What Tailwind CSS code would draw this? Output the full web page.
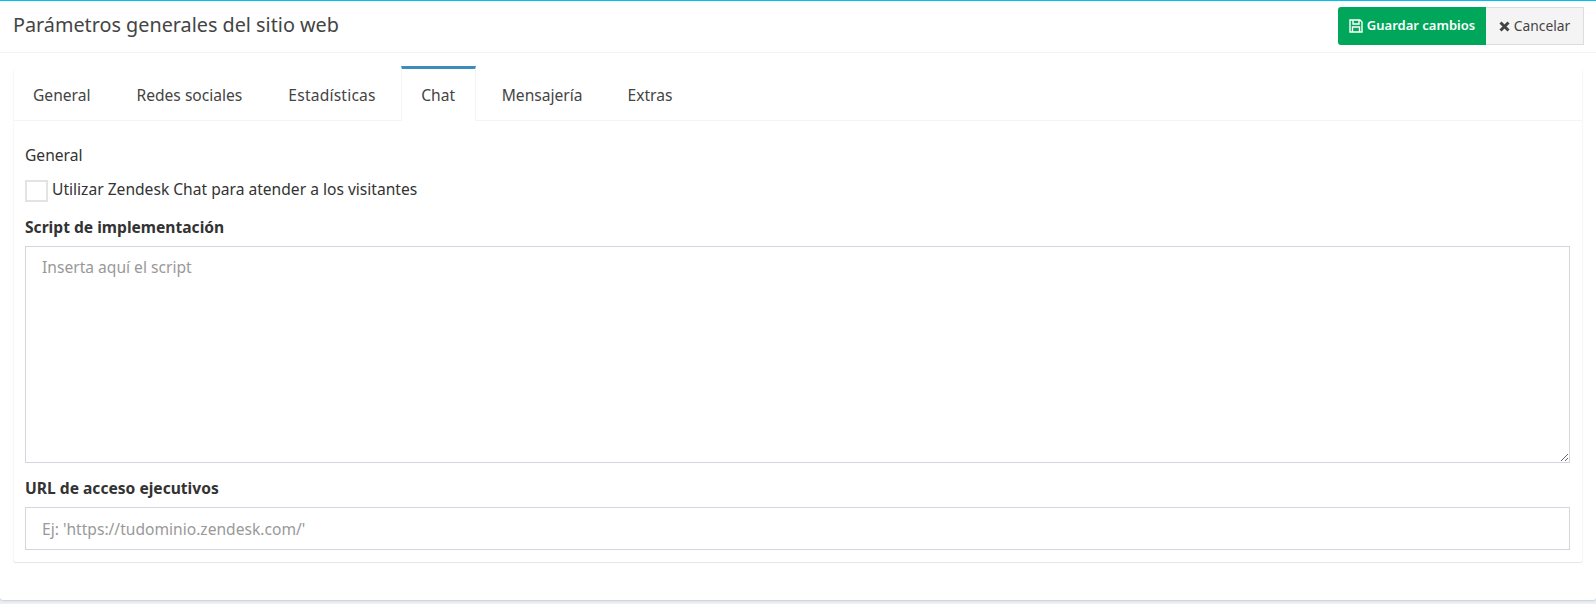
<!DOCTYPE html>
<html lang="es">

<head>
  <meta charset="UTF-8">
  <meta name="viewport" content="width=device-width, initial-scale=1.0">
  <title>Parámetros generales del sitio web</title>
  <script src="https://cdn.jsdelivr.net/npm/@tailwindcss/browser@4"></script>
</head>

<body class="bg-[#ecf0f5] font-['Noto_Sans','Lato',sans-serif] text-[#333] h-[604px] overflow-hidden">

  <div class="h-[600px] bg-white border-t border-[#00c0ef] rounded-b-[3px] shadow-[0_1px_2px_rgba(0,0,0,0.15)]">

    <!-- Cabecera -->
    <header class="h-[52px] flex items-center justify-between pl-[13px] pr-[12px] border-b border-[#f4f4f4]">
      <h1 class="text-[19.800px] text-[#444] pb-[4px]">Parámetros generales del sitio web</h1>
      <div class="flex h-[38px] mb-[1px]">
        <button class="w-[148px] bg-[#00a65a] text-white text-[13px] font-semibold rounded-l-[3px] flex items-center justify-center gap-[4px]">
          <svg class="w-[14px] h-[14px]" viewBox="0 0 14 14" fill="none" stroke="currentColor" stroke-width="1.4"><path d="M1 1h10l2 2v10H1z"/><path d="M4 1v4h6V1M3.500 13V8h7v5"/></svg>
          Guardar cambios
        </button>
        <button class="w-[98px] bg-[#f4f4f4] border border-[#ddd] border-l-0 text-[#444] text-[13.800px] flex items-center justify-center gap-[4px]">
          <svg class="w-[11px] h-[11px]" viewBox="0 0 11 11" stroke="currentColor" stroke-width="3"><path d="M1.500 1.500l8 8M9.500 1.500l-8 8"/></svg>
          Cancelar
        </button>
      </div>
    </header>

    <!-- Tarjeta con pestañas -->
    <div class="mx-[13px] mt-[16px] h-[493px] bg-white rounded-[3px] border-x border-[#f8f8f8] shadow-[0_1px_1px_rgba(0,0,0,0.1)]">
      <nav class="flex h-[52px] border-b border-[#f4f4f4] text-[15.600px] text-[#444]">
        <a class="pl-[19px] pr-[20px] mr-[6px] pt-[2px] flex items-center">General</a>
        <a class="px-[20px] mr-[6px] pt-[2px] flex items-center">Redes sociales</a>
        <a class="px-[20px] mr-[5px] pt-[2px] flex items-center tracking-[0.200px]">Estadísticas</a>
        <a class="relative -mt-[3px] h-[55px] w-[75px] mr-[5px] pt-[2px] flex items-center justify-center bg-white border-t-[3px] border-x border-t-[#3c8dbc] border-x-[#f4f4f4]">Chat</a>
        <a class="pl-[21px] pr-[20px] mr-[5px] pt-[2px] flex items-center">Mensajería</a>
        <a class="px-[20px] pt-[2px] flex items-center">Extras</a>
      </nav>

      <form class="px-[11px] pt-[24px] text-[15.600px]">
        <p class="leading-[20px]">General</p>
        <label class="mt-[14px] flex items-center gap-[4px] h-[22px]">
          <span class="w-[23px] h-[22px] mt-[2px] border-2 border-[#e3e3e3] bg-white"></span>
          Utilizar Zendesk Chat para atender a los visitantes
        </label>
        <label class="block mt-[16px] mb-[9px] font-bold leading-[20px]">Script de implementación</label>
        <textarea class="block w-[1545px] h-[217px] border border-[#d2d6de] px-[16px] py-[9px] outline-none placeholder:text-[#999]" placeholder="Inserta aquí el script"></textarea>
        <label class="block mt-[15px] mb-[9px] font-bold leading-[20px]">URL de acceso ejecutivos</label>
        <input class="block w-[1545px] h-[43px] border border-[#d2d6de] px-[16px] outline-none placeholder:text-[#999]" placeholder="Ej: 'https://tudominio.zendesk.com/'">
      </form>
    </div>
  </div>

</body>

</html>
